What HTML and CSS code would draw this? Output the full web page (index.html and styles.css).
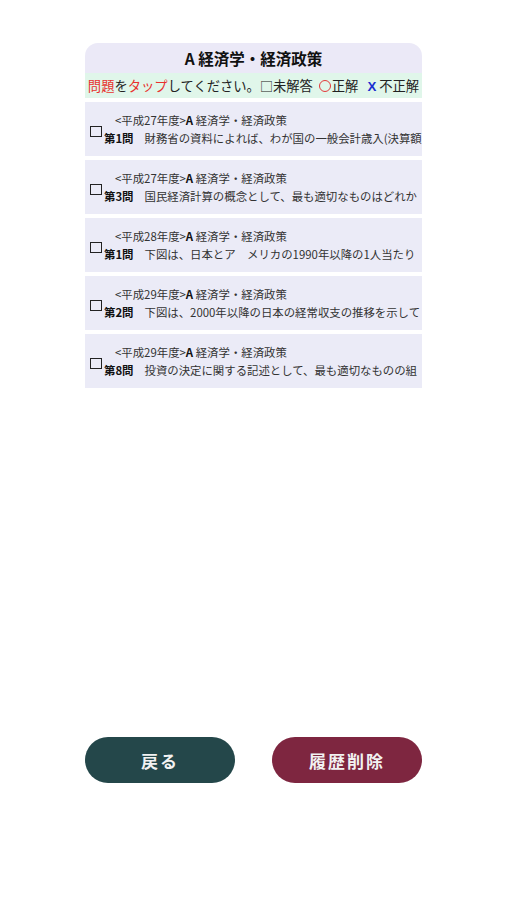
FILE: index.html
```html
<!DOCTYPE html>
<html lang="ja">
<head>
  <meta charset="UTF-8" />
  <title>履歴</title>
  <link rel="stylesheet" href="styles.css">
</head>
<body>
  <div class="page">
    <div class="card">
      <div class="card-title">A 経済学・経済政策</div>
      <div class="guide">
        <span class="red">問題</span>を<span class="red">タップ</span>してください。<span class="box">□</span>未解答 <span class="circle"></span>正解 <span class="cross">X</span> 不正解
      </div>

      <div class="item">
        <div class="check"></div>
        <div class="item-text">
          <div class="item-head">&lt;平成27年度&gt;<b>A</b> 経済学・経済政策</div>
          <div class="item-body"><b>第1問</b>財務省の資料によれば、わが国の一般会計歳入(決算額</div>
        </div>
      </div>
      <div class="item">
        <div class="check"></div>
        <div class="item-text">
          <div class="item-head">&lt;平成27年度&gt;<b>A</b> 経済学・経済政策</div>
          <div class="item-body"><b>第3問</b>国民経済計算の概念として、最も適切なものはどれか</div>
        </div>
      </div>
      <div class="item">
        <div class="check"></div>
        <div class="item-text">
          <div class="item-head">&lt;平成28年度&gt;<b>A</b> 経済学・経済政策</div>
          <div class="item-body"><b>第1問</b>下図は、日本とア　メリカの1990年以降の1人当たり</div>
        </div>
      </div>
      <div class="item">
        <div class="check"></div>
        <div class="item-text">
          <div class="item-head">&lt;平成29年度&gt;<b>A</b> 経済学・経済政策</div>
          <div class="item-body"><b>第2問</b>下図は、2000年以降の日本の経常収支の推移を示して</div>
        </div>
      </div>
      <div class="item">
        <div class="check"></div>
        <div class="item-text">
          <div class="item-head">&lt;平成29年度&gt;<b>A</b> 経済学・経済政策</div>
          <div class="item-body"><b>第8問</b>投資の決定に関する記述として、最も適切なものの組</div>
        </div>
      </div>
    </div>

    <div class="buttons">
      <button class="btn btn-back">戻る</button>
      <button class="btn btn-clear">履歴削除</button>
    </div>
  </div>
</body>
</html>
```

FILE: styles.css
```css
body {
  margin: 0;
  background: #fff;
  font-family: "Noto Sans CJK JP", "Noto Sans", sans-serif;
  color: #222;
}
.page {
  width: 337px;
  margin: 0 auto;
  padding-top: 43px;
}
.card-title {
  background-color: #ebe9f7;
  border-radius: 13px 13px 0 0;
  height: 30px;
  line-height: 31px;
  text-align: center;
  font-size: 15.5px;
  font-weight: bold;
  color: #111;
}
.guide {
  background-color: #e0f6ea;
  height: 25px;
  line-height: 25px;
  font-size: 13.3px;
  text-align: center;
  white-space: nowrap;
  color: #222;
  margin-bottom: 4px;
}
.red {
  color: #e8322e;
}
.box {
  font-size: 13px;
}
.circle {
  display: inline-block;
  box-sizing: border-box;
  width: 12px;
  height: 12px;
  border: 1.6px solid #e3393a;
  border-radius: 50%;
  vertical-align: -1px;
  margin: 0 1px 0 3px;
}
.cross {
  color: #1a2fd0;
  font-weight: bold;
  font-family: "Liberation Sans", sans-serif;
  margin-left: 6px;
}
.item {
  display: flex;
  align-items: flex-end;
  background-color: #ebebf7;
  height: 54px;
  margin-bottom: 4px;
  box-sizing: border-box;
  padding: 0 0 9px 5px;
}
.item:last-child {
  margin-bottom: 0;
}
.check {
  box-sizing: border-box;
  width: 12px;
  height: 11px;
  border: 1.5px solid #222;
  margin: 0 2px 10px 0;
  flex-shrink: 0;
}
.item-text {
  font-size: 11.4px;
  line-height: 18px;
  white-space: nowrap;
  color: #333;
}
.item-head {
  padding-left: 11px;
}
.item-head b {
  color: #111;
}
.item-body b {
  color: #111;
  margin-right: 11px;
}
.buttons {
  display: flex;
  justify-content: space-between;
  margin-top: 349px;
}
.btn {
  width: 150px;
  height: 46px;
  border: none;
  border-radius: 23px;
  color: #f2f2f2;
  font-family: "Noto Sans CJK JP", sans-serif;
  font-size: 17px;
  font-weight: bold;
  letter-spacing: 2px;
  cursor: pointer;
}
.btn-back {
  background-color: #24474a;
}
.btn-clear {
  background-color: #7e2640;
}
```
